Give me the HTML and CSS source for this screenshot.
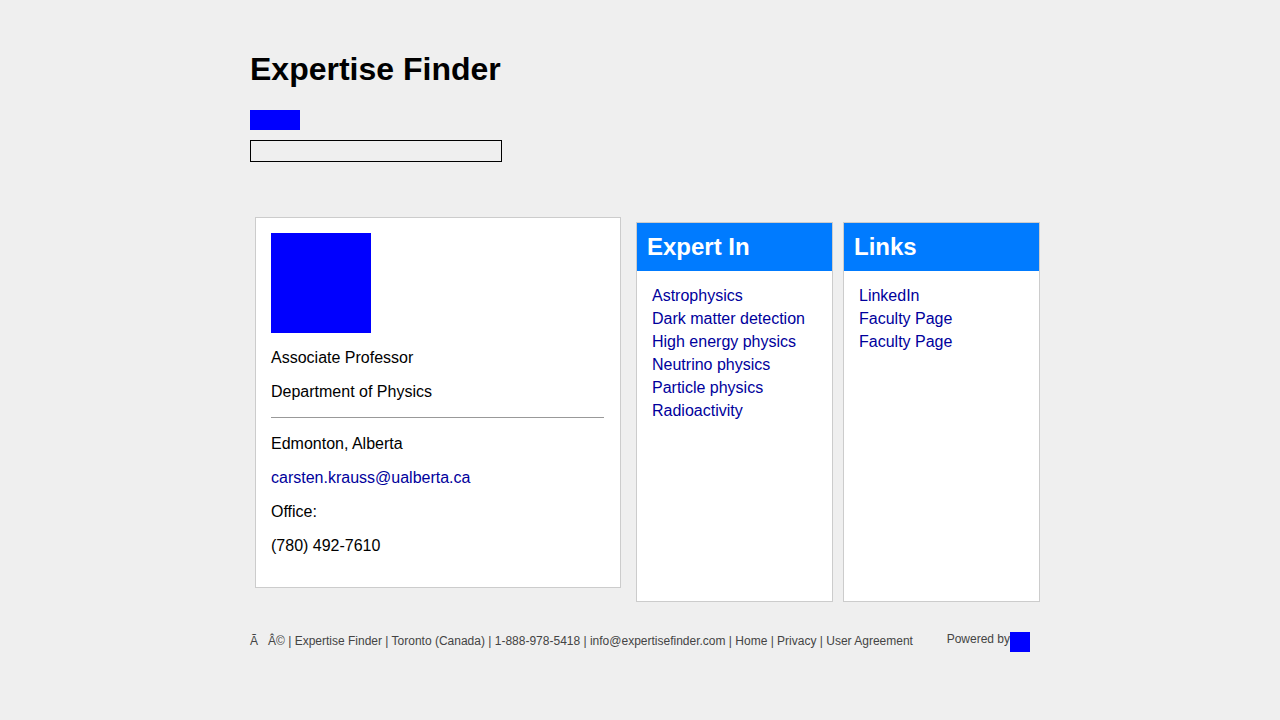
FILE: index.html
```html
<!DOCTYPE html>
<html lang="en">
<head>
<meta charset="utf-8">
<title>Expertise Finder</title>
<link rel="stylesheet" href="styles.css">
</head>
<body>
<div class="page">
  <header class="header">
    <h1 class="title">Expertise Finder</h1>
    <div class="logo-bar"></div>
    <div class="search-box"></div>
  </header>
  <main class="main">
    <section class="profile-card">
      <div class="photo"></div>
      <p class="line">Associate Professor</p>
      <p class="line">Department of Physics</p>
      <hr class="divider">
      <p class="line">Edmonton, Alberta</p>
      <p class="line"><a class="link" href="#">carsten.krauss@ualberta.ca</a></p>
      <p class="line">Office:</p>
      <p class="line">(780) 492-7610</p>
    </section>
    <section class="panel panel-expert">
      <h2 class="panel-title">Expert In</h2>
      <ul class="panel-list">
        <li><a class="link" href="#">Astrophysics</a></li>
        <li><a class="link" href="#">Dark matter detection</a></li>
        <li><a class="link" href="#">High energy physics</a></li>
        <li><a class="link" href="#">Neutrino physics</a></li>
        <li><a class="link" href="#">Particle physics</a></li>
        <li><a class="link" href="#">Radioactivity</a></li>
      </ul>
    </section>
    <section class="panel panel-links">
      <h2 class="panel-title">Links</h2>
      <ul class="panel-list">
        <li><a class="link" href="#">LinkedIn</a></li>
        <li><a class="link" href="#">Faculty Page</a></li>
        <li><a class="link" href="#">Faculty Page</a></li>
      </ul>
    </section>
  </main>
  <footer class="footer">
    <div class="footer-text">Ã&nbsp;&nbsp; Â© | Expertise Finder | Toronto (Canada) | 1-888-978-5418 | info@expertisefinder.com | Home | Privacy | User Agreement</div>
    <div class="powered">
      <span class="powered-text">Powered by</span>
      <span class="powered-logo"></span>
    </div>
  </footer>
</div>
</body>
</html>
```

FILE: styles.css
```css
html, body {
  margin: 0;
  padding: 0;
  background: #efefef;
}

body {
  font-family: "Liberation Sans", Arial, sans-serif;
  color: #000;
}

.page {
  width: 780px;
  margin: 0 auto;
  padding-top: 30px;
}

.title {
  font-size: 32px;
  font-weight: bold;
  line-height: 36px;
  margin: 21px 0 23px;
}

.logo-bar {
  width: 50px;
  height: 20px;
  background: #0000ff;
}

.search-box {
  width: 250px;
  height: 20px;
  border: 1px solid #000;
  margin-top: 10px;
}

.main {
  display: flex;
  align-items: flex-start;
  margin-top: 55px;
}

.profile-card {
  flex-shrink: 0;
  width: 333px;
  margin-left: 5px;
  padding: 15px 16px 16px 15px;
  background: #fff;
  border: 1px solid #ccc;
}

.photo {
  width: 100px;
  height: 100px;
  background: #0000ff;
}

.line {
  font-size: 16px;
  margin: 16px 0 16px;
}

.divider {
  border: 0;
  border-top: 1px solid #999;
  height: 0;
  margin: 16px 0 17px;
}

.link {
  color: #00009c;
  text-decoration: none;
}

.panel {
  flex-shrink: 0;
  width: 195px;
  height: 378px;
  margin-top: 5px;
  background: #fff;
  border: 1px solid #ccc;
}

.panel-expert {
  margin-left: 15px;
}

.panel-links {
  margin-left: 10px;
}

.panel-title {
  margin: 0;
  padding: 10px 10px;
  height: 28px;
  line-height: 28px;
  font-size: 24px;
  font-weight: bold;
  color: #fff;
  background: #007bff;
}

.panel-list {
  list-style: none;
  margin: 0;
  padding: 13px 15px 0;
  font-size: 16px;
  line-height: 23px;
}

.footer {
  display: flex;
  justify-content: space-between;
  align-items: flex-start;
  margin-top: 30px;
  font-size: 12px;
  color: #444;
}

.footer-text {
  padding-top: 2px;
}

.powered {
  display: flex;
  align-items: flex-start;
}

.powered-logo {
  display: block;
  width: 20px;
  height: 20px;
  background: #0000ff;
}
```
